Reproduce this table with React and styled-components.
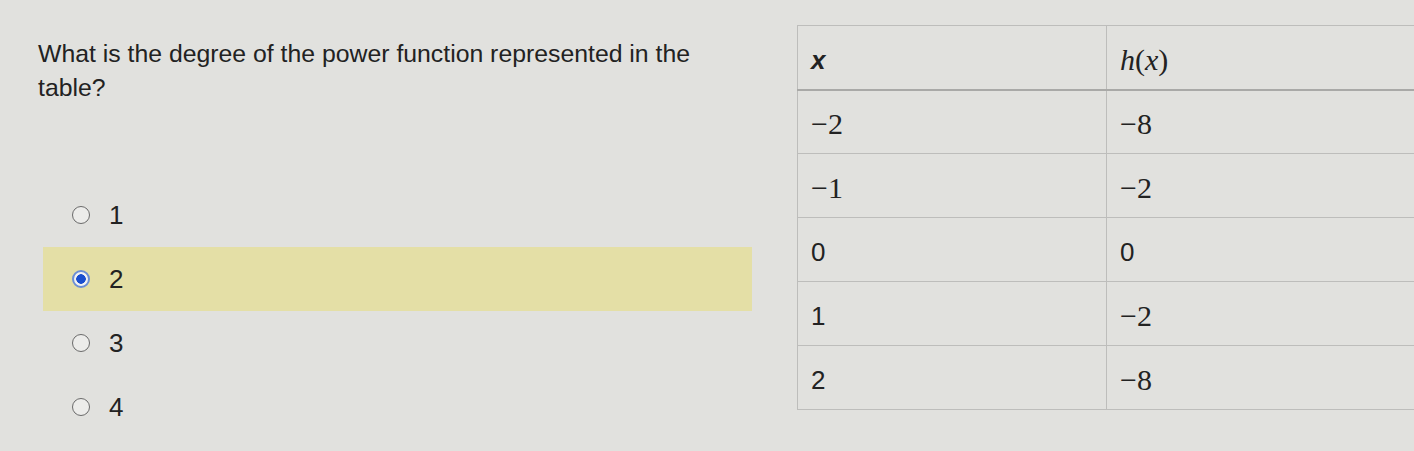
import React from 'react';
import styled, { createGlobalStyle } from 'styled-components';

const GlobalStyle = createGlobalStyle`
  html, body {
    margin: 0;
    padding: 0;
    background: #e1e1de;
    overflow: hidden;
  }
`

const Page = styled.div`
  display: flex;
  align-items: flex-start;
  width: 1414px;
  height: 451px;
  overflow: hidden;
  font-family: "Liberation Sans", Arial, sans-serif;
  color: #222;
`

const QuestionPanel = styled.div`
  width: 714px;
  padding: 37px 0 0 38px;
  flex-shrink: 0;
`

const Question = styled.p`
  margin: 0;
  font-size: 24.8px;
  line-height: 34px;
  width: 690px;
`

const Options = styled.div`
  margin-top: 78px;
  margin-left: 5px;
  display: flex;
  flex-direction: column;
`

const Option = styled.label`
  display: flex;
  align-items: center;
  gap: 19px;
  height: 64px;
  padding-left: 29px;
  background: ${p => (p.selected ? '#e4dfa6' : 'transparent')};
  font-size: 26px;
`

const Radio = styled.span`
  box-sizing: border-box;
  width: 18px;
  height: 18px;
  border-radius: 50%;
  border: ${p => (p.checked ? '2px solid #6b8fd6' : '1.5px solid #6a6a6a')};
  background: ${p => (p.checked ? 'radial-gradient(circle, #1a4fcf 0 4.5px, #f2f2f2 5px)' : '#ececea')};
`

const Table = styled.table`
  margin: 25px 0 0 45px;
  border-collapse: collapse;
  width: 720px;
  flex-shrink: 0;
  font-size: 26px;
`

const Row = styled.tr`
  height: 64px;
`

const Cell = styled.td`
  padding: 5px 13px 0;
  border: 1px solid #bdbdbb;
  border-bottom: ${p => (p.header ? '2px solid #a9a9a7' : '1px solid #bdbdbb')};
  vertical-align: middle;
  width: ${p => (p.first ? '282px' : 'auto')};
  line-height: 1;
`

const Sans = styled.span`
  font-family: "Liberation Sans", Arial, sans-serif;
  font-style: ${p => (p.italic ? 'italic' : 'normal')};
  font-weight: ${p => (p.bold ? 700 : 400)};
`

const MathText = styled.span`
  font-family: "Liberation Serif", "Times New Roman", serif;
  font-size: 30px;
  font-style: ${p => (p.italic ? 'italic' : 'normal')};
`

const options = ['1', '2', '3', '4']
const rows = [
  [{ v: '−2', math: true }, { v: '−8', math: true }],
  [{ v: '−1', math: true }, { v: '−2', math: true }],
  [{ v: '0' }, { v: '0' }],
  [{ v: '1' }, { v: '−2', math: true }],
  [{ v: '2' }, { v: '−8', math: true }],
]

const Value = ({ v, math }) => (math ? <MathText>{v}</MathText> : <Sans>{v}</Sans>)

const App = () => {
  return (
    <Page>
      <GlobalStyle />
      <QuestionPanel>
        <Question>What is the degree of the power function represented in the table?</Question>
        <Options>
          {options.map(o => (
            <Option key={o} selected={o === '2'}>
              <Radio checked={o === '2'} />
              {o}
            </Option>
          ))}
        </Options>
      </QuestionPanel>
      <Table>
        <tbody>
          <Row>
            <Cell header first>
              <Sans italic bold>x</Sans>
            </Cell>
            <Cell header>
              <MathText italic>h</MathText>
              <MathText>(</MathText>
              <MathText italic>x</MathText>
              <MathText>)</MathText>
            </Cell>
          </Row>
          {rows.map((r, i) => (
            <Row key={i}>
              <Cell first>
                <Value {...r[0]} />
              </Cell>
              <Cell>
                <Value {...r[1]} />
              </Cell>
            </Row>
          ))}
        </tbody>
      </Table>
    </Page>
  )
}

export default App
